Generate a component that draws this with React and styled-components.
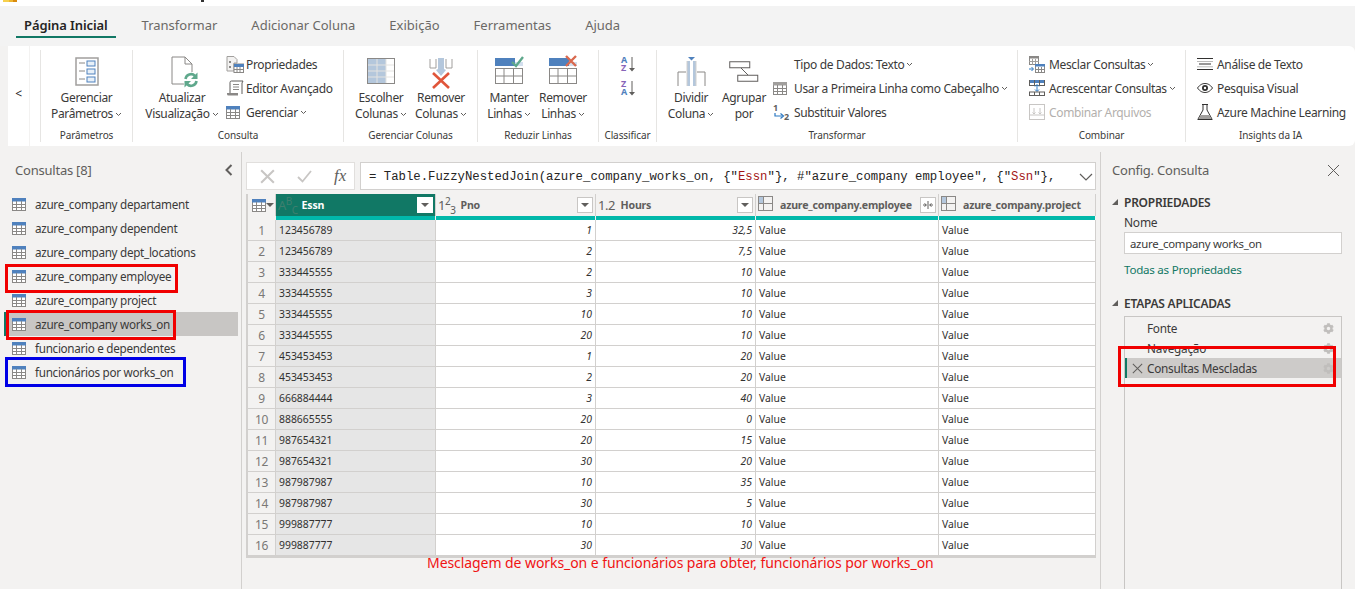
import React from 'react';
import styled, { createGlobalStyle } from 'styled-components';
import { FaCog } from 'react-icons/fa';

const GlobalStyle = createGlobalStyle`
  html, body { margin: 0; padding: 0; background: #f3f2f1; }
  * { box-sizing: border-box; }
`;

const UI = `"Noto Sans", "Open Sans", sans-serif`;

const Page = styled.div`
  position: relative;
  width: 1355px;
  height: 589px;
  overflow: hidden;
  background: #f3f2f1;
  font-family: ${UI};
  color: #252423;
  display: flex;
  flex-direction: column;
`;

const TitleStrip = styled.div`
  height: 6px;
  background: #fff;
  display: flex;
  align-items: flex-start;
  padding-left: 3px;
`;

const LogoSliver = styled.div`
  width: 14px;
  height: 2px;
  background: linear-gradient(90deg, #f6d04d 0 45%, #eeb62f 45% 70%, #d98b0f 70%);
`;

const TitleTail = styled.div`
  width: 3px;
  height: 2px;
  margin-left: 184px;
  background: #333;
`;

const TabBar = styled.div`
  height: 40px;
  background: #f3f3f3;
  display: flex;
  gap: 18px;
  padding-left: 16px;
`;

const Tab = styled.div`
  height: 32px;
  padding: 8px 8px 0;
  display: flex;
  align-items: center;
  font-size: 13px;
  font-weight: ${p => (p.$active ? 600 : 400)};
  letter-spacing: ${p => (p.$active ? '-0.1px' : '0')};
  color: ${p => (p.$active ? '#252423' : '#6b6966')};
  border-bottom: 2px solid ${p => (p.$active ? '#117865' : 'transparent')};
`;

const Ribbon = styled.div`
  height: 100px;
  margin-left: 8px;
  background: #fff;
  border-radius: 0 6px 6px 0;
  display: flex;
  align-items: stretch;
  font-size: 12px;
  letter-spacing: -0.35px;
`;

const Collapse = styled.div`
  width: 22px;
  display: flex;
  align-items: center;
  justify-content: center;
  border-right: 1px solid #f3f2f1;
  font-size: 12px;
  margin-right: 10px;
  padding-bottom: 6px;
`;

const Group = styled.div`
  width: ${p => p.$w}px;
  flex: ${p => (p.$fill ? 1 : 'none')};
  margin: 4px 0;
  border-left: 1px solid #e6e5e3;
  display: flex;
  flex-direction: column;
`;

const GroupBody = styled.div`
  height: 72px;
  flex: none;
  display: flex;
  justify-content: ${p => (p.$center ? 'center' : 'flex-start')};
  padding-left: ${p => p.$pad || 0}px;
  gap: ${p => p.$gap || 0}px;
`;

const GroupLabel = styled.div`
  height: 20px;
  text-align: center;
  font-size: 10px;
  letter-spacing: -0.1px;
  line-height: 26px;
  color: #3b3a39;
`;

const LargeBtn = styled.div`
  width: ${p => p.$w}px;
  display: flex;
  flex-direction: column;
  align-items: center;
  text-align: center;
  line-height: 16px;
  color: #3b3a39;
`;

const LargeIcon = styled.div`
  height: 40px;
  padding-top: ${p => p.$top || 5}px;
  padding-left: ${p => p.$left || 0}px;
`;

const SmallCol = styled.div`
  display: flex;
  flex-direction: column;
  padding-top: 2px;
  margin-left: ${p => p.$left || 0}px;
`;

const SmallBtn = styled.div`
  height: 24px;
  flex: none;
  display: flex;
  align-items: center;
  white-space: nowrap;
  color: ${p => (p.$off ? '#b3b0ad' : '#3b3a39')};
`;

const SmallIcon = styled.span`
  width: ${p => p.$w || 20}px;
  flex: none;
  display: flex;
  align-items: center;
`;

const Caret = styled.svg`
  margin-left: 2px;
  flex: none;
  vertical-align: middle;
`;

const LetterIcon = styled.svg`
  overflow: visible;
  font-family: "Noto Sans", sans-serif;
  font-weight: 700;
`;

const Main = styled.div`
  margin-top: 6px;
  flex: 1;
  display: flex;
  min-height: 0;
`;

const LeftPane = styled.aside`
  width: 242px;
  flex: none;
  border-right: 1px solid #d2d0ce;
`;

const PaneHead = styled.div`
  height: 36px;
  margin-bottom: ${p => p.$after}px;
  padding: 0 ${p => p.$end}px 0 ${p => p.$pad}px;
  display: flex;
  align-items: center;
  justify-content: space-between;
  font-size: 13px;
  letter-spacing: -0.22px;
  color: #605e5c;
`;

const QueryList = styled.div`
  margin: 0 3px 0 4px;
`;

const QueryItem = styled.div`
  height: 24px;
  display: flex;
  align-items: center;
  gap: 9px;
  padding-left: ${p => (p.$on ? 6 : 8)}px;
  font-size: 11.7px;
  letter-spacing: -0.3px;
  color: #3b3a39;
  background: ${p => (p.$on ? '#c8c6c4' : 'transparent')};
  border-left: ${p => (p.$on ? '2px solid #117865' : 'none')};
`;

const Center = styled.main`
  width: 858px;
  flex: none;
  padding: 10px 4px 0;
`;

const FormulaRow = styled.div`
  height: 28px;
  display: flex;
  gap: 5px;
`;

const FormulaTools = styled.div`
  width: 109px;
  background: #fff;
  border: 1px solid #e1dfdd;
  display: flex;
  align-items: center;
  gap: 22px;
  padding-left: 13px;
`;

const FxMark = styled.span`
  font-family: "Liberation Serif", serif;
  font-style: italic;
  font-size: 17px;
  color: #605e5c;
`;

const FormulaInput = styled.div`
  flex: 1;
  background: #fff;
  border: 1px solid #d2d0ce;
  padding: 1px 2px 0 8px;
  display: flex;
  align-items: center;
  justify-content: space-between;
  font-family: "Liberation Mono", monospace;
  font-size: 12.3px;
  color: #252423;
  white-space: pre;
`;

const Str = styled.span`
  color: #a31515;
`;

const Grid = styled.div`
  margin-top: 4px;
  width: 850px;
  border-bottom: 2px solid #d2d0ce;
  border-left: 2px solid #d2d0ce;
`;

const COLS = '28px 160px 160px 160px 183px 157px';

const HeadRow = styled.div`
  display: grid;
  grid-template-columns: ${COLS};
  height: 22px;
`;

const HeadCell = styled.div`
  display: flex;
  align-items: center;
  padding: 0 ${p => (p.$corner ? 0 : 2)}px 0 ${p => (p.$corner ? 4 : 2)}px;
  font-size: 10.6px;
  font-weight: 700;
  letter-spacing: -0.2px;
  white-space: nowrap;
  color: ${p => (p.$on ? '#fff' : '#605e5c')};
  background: ${p => (p.$on ? '#117865' : '#f3f2f1')};
  border-right: 1px solid #d2d0ce;
`;

const TypeMark = styled.span`
  width: ${p => p.$w || 20}px;
  flex: none;
  font-weight: 400;
  font-size: 13px;
  letter-spacing: -0.5px;
  white-space: nowrap;
  color: ${p => (p.$on ? '#3e7f6f' : '#605e5c')};
  sup, sub { font-size: 10px; line-height: 0; }
`;

const HeadName = styled.span`
  flex: 1;
  overflow: hidden;
`;

const FilterBtn = styled.span`
  width: 16px;
  height: 16px;
  flex: none;
  background: #fff;
  border: 1px solid ${p => (p.$on ? '#fff' : '#c8c6c4')};
  display: flex;
  align-items: center;
  justify-content: center;
`;

const AccentRow = styled.div`
  display: grid;
  grid-template-columns: ${COLS};
  height: 4px;
  background: #f3f2f1;
`;

const Accent = styled.div`
  background: ${p => (p.$none ? 'transparent' : '#01b8aa')};
  border-right: 1px solid #f3f2f1;
`;

const Row = styled.div`
  display: grid;
  grid-template-columns: ${COLS};
  height: 21px;
  font-size: 10.4px;
  color: #323130;
  border-bottom: 1px solid #d2d0ce;
`;

const Cell = styled.div`
  display: flex;
  align-items: center;
  padding: 0 3px;
  background: ${p => (p.$shade ? '#e6e6e6' : '#fff')};
  justify-content: ${p => (p.$num ? 'flex-end' : 'flex-start')};
  font-style: ${p => (p.$num ? 'italic' : 'normal')};
  border-right: 1px solid #d2d0ce;
`;

const RowNum = styled(Cell)`
  background: #f3f2f1;
  justify-content: center;
  font-size: 12px;
  letter-spacing: -0.3px;
  color: #7a7876;
`;

const Caption = styled.div`
  margin: -4px 0 0 181px;
  font-size: 14px;
  letter-spacing: -0.07px;
  line-height: 18px;
  color: #f01414;
  white-space: nowrap;
`;

const RightPane = styled.aside`
  flex: 1;
  border-left: 1px solid #d2d0ce;
  display: flex;
  flex-direction: column;
`;

const Section = styled.div`
  padding-left: 23px;
  padding-right: 13px;
`;

const SectionTitle = styled.div`
  position: relative;
  margin-top: ${p => p.$top}px;
  height: 18px;
  display: flex;
  align-items: center;
  font-size: 12px;
  font-weight: 600;
  letter-spacing: -0.25px;
  color: #3b3a39;
`;

const Tri = styled.svg`
  position: absolute;
  left: -12px;
  top: 6px;
`;

const FieldLabel = styled.div`
  margin-top: 4px;
  font-size: 12px;
  letter-spacing: -0.25px;
  line-height: 16px;
  color: #3b3a39;
`;

const NameInput = styled.div`
  height: 22px;
  margin-top: 1px;
  padding-left: 5px;
  background: #fff;
  border: 1px solid #d2d0ce;
  display: flex;
  align-items: center;
  font-size: 11.4px;
  letter-spacing: -0.28px;
  color: #3b3a39;
`;

const LinkText = styled.div`
  margin-top: 8px;
  font-size: 11.6px;
  letter-spacing: -0.25px;
  line-height: 16px;
  color: #117865;
`;

const Steps = styled.div`
  margin: 4px 13px 0 23px;
  flex: 1;
  padding-top: 1px;
  border: 1px solid #c8c6c4;
  border-bottom: none;
`;

const Step = styled.div`
  height: 20px;
  display: flex;
  align-items: center;
  font-size: 11.8px;
  letter-spacing: -0.28px;
  color: #3b3a39;
  padding-left: ${p => (p.$on ? 5 : 22)}px;
  padding-right: 7px;
  background: ${p => (p.$on ? '#cdcbc9' : 'transparent')};
  border-left: ${p => (p.$on ? '2px solid #117865' : 'none')};
  svg.gear { margin-left: auto; color: #c0bebc; }
`;

const StepX = styled.span`
  width: 15px;
  display: flex;
`;

const Mark = styled.div`
  position: absolute;
  left: ${p => p.$x}px;
  top: ${p => p.$y}px;
  width: ${p => p.$w}px;
  height: ${p => p.$h}px;
  border: 3px solid ${p => p.$c};
  pointer-events: none;
`;

/* ---------- icons ---------- */

const Chev = () => (
  <Caret width="7" height="5" viewBox="0 0 7 5">
    <path d="M1 1l2.5 2.5L6 1" fill="none" stroke="#605e5c" strokeWidth="1" />
  </Caret>
);

const TableIcon = ({ w = 14, h = 13, head = '#4f81bd', line = '#8a8886' }) => (
  <svg width={w} height={h} viewBox="0 0 14 13">
    <rect x="0.5" y="0.5" width="13" height="12" fill="#fff" stroke={line} />
    <rect x="0" y="0" width="14" height="3.5" fill={head} />
    <path d="M0 6.5h14M0 9.5h14M4.5 3v10M9.5 3v10" stroke={line} strokeWidth="1" />
  </svg>
);

const ParamsIcon = () => (
  <svg width="24" height="29" viewBox="0 0 24 29">
    <rect x="1" y="1" width="22" height="27" fill="#fff" stroke="#a19f9d" strokeWidth="1.5" />
    <path d="M4 6h6M4 14h6M4 22h6" stroke="#8a8886" />
    <rect x="12" y="4" width="8" height="5" fill="#e8f0f8" stroke="#4f81bd" />
    <rect x="12" y="12" width="8" height="5" fill="#e8f0f8" stroke="#4f81bd" />
    <rect x="12" y="20" width="8" height="5" fill="#e8f0f8" stroke="#4f81bd" />
  </svg>
);

const RefreshIcon = () => (
  <svg width="28" height="32" viewBox="0 0 28 32">
    <path d="M13 28H1V1h13l7 7v8M14 1v7h7" fill="#fff" stroke="#8a8886" />
    <circle cx="20" cy="24" r="8" fill="#fff" />
    <path d="M14.500 23a5.500 5.500 0 0 1 9.500-3" fill="none" stroke="#5fa88c" strokeWidth="2.600" />
    <path d="M26.500 16.500v6.500h-6.500z" fill="#5fa88c" />
    <path d="M25.500 25a5.500 5.500 0 0 1-9.500 3" fill="none" stroke="#5fa88c" strokeWidth="2.600" />
    <path d="M13.500 31.500V25h6.500z" fill="#5fa88c" />
  </svg>
);

const PropsIcon = () => (
  <svg width="18" height="17" viewBox="0 0 18 17">
    <path d="M1 .5h7l3 3V7H8v8H1z" fill="#f3f2f1" stroke="#a19f9d" />
    <path d="M3 5h2v2H3zM3 10h2v2H3z" fill="#8a8886" />
    <rect x="8" y="8" width="9.5" height="8.5" fill="#fff" stroke="#8a8886" />
    <rect x="8" y="8" width="10" height="3" fill="#4f81bd" />
    <path d="M8 13.5h10M11 11v6M14 11v6" stroke="#8a8886" />
  </svg>
);

const ScrollIcon = () => (
  <svg width="18" height="16" viewBox="0 0 18 16">
    <path d="M4 13V2.5A1.5 1.5 0 0 1 5.5 1H17l-1 2v11" fill="#fff" stroke="#605e5c" />
    <path d="M1 13h11v2.5H2.5A1.5 1.5 0 0 1 1 14z" fill="#8a8886" />
    <path d="M7 4.5h6M7 7h6M7 9.5h6" stroke="#8a8886" />
  </svg>
);

const ColumnsIcon = () => (
  <svg width="28" height="26" viewBox="0 0 28 26">
    <rect x="0.5" y="0.5" width="27" height="25" fill="#fff" stroke="#8a8886" />
    <rect x="1" y="1" width="18" height="24" fill="#b4c7dc" />
    <path d="M1 7h26M1 13h26M1 19h26M10 1v24M19 1v24" stroke="#e4e3e1" />
  </svg>
);

const RemoveColsIcon = () => (
  <svg width="24" height="31" viewBox="0 0 24 31">
    <path d="M1 1v9h6V1M17 1v9h6V1" fill="none" stroke="#a19f9d" />
    <path d="M9 0h6v11l2 1-5 6-5-6 2-1z" fill="#b4c7dc" />
    <path d="M4 15l16 15M20 15L4 30" stroke="#e0553a" strokeWidth="2.6" />
  </svg>
);

const KeepRowsIcon = ({ remove }) => (
  <svg width="30" height="30" viewBox="0 0 30 30">
    <rect x="1" y="3" width="20" height="8" fill="#4f81bd" />
    <rect x="21" y="7" width="8" height="4" fill="#4f81bd" opacity="0.25" />
    <rect x="1.5" y="13.5" width="27" height="15" fill="#fff" stroke="#8a8886" />
    <path d="M1 21h28M10 13v16M19.500 13v16" stroke="#8a8886" />
    {remove ? (
      <path d="M18 1l10 10M28 1L18 11" stroke="#d9694f" strokeWidth="2.4" />
    ) : (
      <path d="M18 7l4 4 7-9" fill="none" stroke="#5fa88c" strokeWidth="2.4" />
    )}
  </svg>
);

const SortIcon = ({ top, bottom, topC, bottomC }) => (
  <LetterIcon width="16" height="17" viewBox="0 0 16 17">
    <text x="1" y="7" fontSize="9" fill={topC}>{top}</text>
    <text x="1" y="15" fontSize="9" fill={bottomC}>{bottom}</text>
    <path d="M12 1v13" stroke="#605e5c" />
    <path d="M9 12h6l-3 3.500z" fill="#605e5c" />
  </LetterIcon>
);

const SplitIcon = () => (
  <svg width="29" height="29" viewBox="0 0 29 29">
    <path d="M1 29V15h8M28 29V15h-8" fill="none" stroke="#8a8886" />
    <path d="M10 4h3v25h-3zM16 4h3v25h-3z" fill="#b4c7dc" />
    <path d="M10 4v25M19 4v25" stroke="#d2d0ce" />
    <path d="M11 0h7l-3.500 3.500z" fill="#4f81bd" />
  </svg>
);

const GroupByIcon = () => (
  <svg width="30" height="21" viewBox="0 0 30 21">
    <rect x="0.750" y="0.750" width="20" height="6" fill="#fff" stroke="#605e5c" />
    <rect x="8.750" y="14.250" width="20" height="6" fill="#fff" stroke="#605e5c" />
    <path d="M12 7l7 7" stroke="#605e5c" />
  </svg>
);

const ReplaceIcon = () => (
  <LetterIcon width="18" height="18" viewBox="0 0 18 18">
    <text x="0" y="8" fontSize="9" fill="#605e5c">1</text>
    <text x="11" y="17" fontSize="9" fill="#605e5c">2</text>
    <path d="M2 10v3h7" fill="none" stroke="#2b78c2" strokeWidth="1.200" />
    <path d="M7.500 10.500l3 2.500-3 2.500" fill="none" stroke="#2b78c2" strokeWidth="1.200" />
  </LetterIcon>
);

const MergeIcon = () => (
  <svg width="16" height="17" viewBox="0 0 16 17">
    <rect x="0.500" y="0.500" width="9" height="8" fill="#fff" stroke="#8a8886" />
    <rect x="0" y="0" width="10" height="2.500" fill="#8a8886" />
    <path d="M0 5.500h10M3.500 3v6M6.500 3v6" stroke="#a19f9d" />
    <rect x="6.500" y="8.500" width="9" height="8" fill="#fff" stroke="#8a8886" />
    <rect x="6" y="8" width="10" height="2.500" fill="#4f81bd" />
    <path d="M6 13.500h10M9.500 11v6M12.500 11v6" stroke="#8a8886" />
    <path d="M0 13h4M2.500 11l2 2-2 2" fill="none" stroke="#2b78c2" />
  </svg>
);

const AppendIcon = () => (
  <svg width="16" height="16" viewBox="0 0 16 16">
    <rect x="0" y="0" width="16" height="3" fill="#4f81bd" />
    <path d="M.500 0v5.500M5.500 0v5.500M10.500 0v5.500M15.500 0v5.500M0 5.500h16" stroke="#605e5c" />
    <path d="M8 5v6M6 6.500l2-2 2 2M6 9.500l2 2 2-2" fill="none" stroke="#2b78c2" />
    <rect x="0.500" y="12" width="15" height="3.500" fill="#fff" stroke="#605e5c" />
    <path d="M5.500 12v4M10.500 12v4" stroke="#605e5c" />
  </svg>
);

const CombineIcon = () => (
  <svg width="16" height="16" viewBox="0 0 16 16">
    <rect x="0.500" y="0.500" width="15" height="15" fill="#fff" stroke="#c8c6c4" />
    <path d="M1 11h14M5 4v6M3.500 8.500L5 10l1.500-1.500M11 4v6M9.500 8.500L11 10l1.500-1.500" fill="none" stroke="#c8c6c4" />
  </svg>
);

const LinesIcon = () => (
  <svg width="16" height="14" viewBox="0 0 16 14">
    <path d="M0 1.500h16M2 7h12M0 12.500h16" stroke="#323130" strokeWidth="1.100" />
    <path d="M0 4.500h16M0 9.800h16" stroke="#a19f9d" strokeWidth="0.700" />
  </svg>
);

const EyeIcon = () => (
  <svg width="16" height="10" viewBox="0 0 16 10">
    <path d="M.500 5C3 1.500 5.500.500 8 .500s5 1 7.500 4.500C13 8.500 10.500 9.500 8 9.500S3 8.500.500 5z" fill="#fff" stroke="#323130" />
    <circle cx="8" cy="5" r="3" fill="#323130" />
    <circle cx="8" cy="5" r="1.200" fill="#fff" />
  </svg>
);

const FlaskIcon = () => (
  <svg width="16" height="16" viewBox="0 0 16 16">
    <path d="M5 .500h6M6 .500v5.500L.800 15.500h14.400L10 6V.500" fill="#fff" stroke="#323130" />
    <path d="M3.500 11h9l2 4H1.500z" fill="#a19f9d" />
  </svg>
);

const CloseX = ({ s = 13, c = '#605e5c', w = 1 }) => (
  <svg width={s} height={s} viewBox="0 0 13 13">
    <path d="M1 1l11 11M12 1L1 12" stroke={c} strokeWidth={w} fill="none" />
  </svg>
);

const CheckMark = () => (
  <svg width="15" height="13" viewBox="0 0 15 13">
    <path d="M1 7l4.500 4.500L14 1" fill="none" stroke="#c8c6c4" strokeWidth="1.800" />
  </svg>
);

const BackChevron = () => (
  <svg width="8" height="12" viewBox="0 0 8 12">
    <path d="M6.500 1L1.500 6l5 5" fill="none" stroke="#605e5c" strokeWidth="2" />
  </svg>
);

const DownChevron = () => (
  <svg width="14" height="8" viewBox="0 0 14 8">
    <path d="M1 1l6 6 6-6" fill="none" stroke="#605e5c" strokeWidth="1.200" />
  </svg>
);

const FilterTri = ({ c = '#605e5c' }) => (
  <svg width="8" height="4" viewBox="0 0 8 4">
    <path d="M0 0h8L4 4z" fill={c} />
  </svg>
);

const ExpandIcon = () => (
  <svg width="12" height="8" viewBox="0 0 12 8">
    <path d="M1 4h3M2.500 2.500L4.500 4l-2 1.500M11 4H8M9.500 2.500L7.500 4l2 1.500M6 0v8" fill="none" stroke="#605e5c" />
  </svg>
);

const ColTableIcon = () => (
  <svg width="15" height="15" viewBox="0 0 15 15">
    <rect x="0.500" y="0.500" width="14" height="14" fill="#f3f2f1" stroke="#8a8886" />
    <path d="M0 7.500h15M5.500 0v15" stroke="#8a8886" />
    <rect x="1" y="1" width="4" height="6" fill="#b4c7dc" />
  </svg>
);

const TriDown = () => (
  <Tri width="6" height="6" viewBox="0 0 6 6">
    <path d="M6 0v6H0z" fill="#605e5c" />
  </Tri>
);

/* ---------- data ---------- */

const queries = [
  'azure_company departament',
  'azure_company dependent',
  'azure_company dept_locations',
  'azure_company employee',
  'azure_company project',
  'azure_company works_on',
  'funcionario e dependentes',
  'funcionários por works_on',
];

const rows = [
  ['123456789', '1', '32,5'],
  ['123456789', '2', '7,5'],
  ['333445555', '2', '10'],
  ['333445555', '3', '10'],
  ['333445555', '10', '10'],
  ['333445555', '20', '10'],
  ['453453453', '1', '20'],
  ['453453453', '2', '20'],
  ['666884444', '3', '40'],
  ['888665555', '20', '0'],
  ['987654321', '20', '15'],
  ['987654321', '30', '20'],
  ['987987987', '10', '35'],
  ['987987987', '30', '5'],
  ['999887777', '10', '10'],
  ['999887777', '30', '30'],
];

const tabs = ['Página Inicial', 'Transformar', 'Adicionar Coluna', 'Exibição', 'Ferramentas', 'Ajuda'];

const App = () => (
  <Page>
    <GlobalStyle />
    <TitleStrip>
      <LogoSliver />
      <TitleTail />
    </TitleStrip>

    <TabBar>
      {tabs.map((t, i) => (
        <Tab key={t} $active={i === 0}>{t}</Tab>
      ))}
    </TabBar>

    <Ribbon>
      <Collapse>&lt;</Collapse>

      <Group $w={92}>
        <GroupBody $center>
          <LargeBtn $w={80}>
            <LargeIcon $top={7}><ParamsIcon /></LargeIcon>
            <span>Gerenciar</span>
            <span>Parâmetros<Chev /></span>
          </LargeBtn>
        </GroupBody>
        <GroupLabel>Parâmetros</GroupLabel>
      </Group>

      <Group $w={211}>
        <GroupBody $pad={5}>
          <LargeBtn $w={88}>
            <LargeIcon $top={6} $left={5}><RefreshIcon /></LargeIcon>
            <span>Atualizar</span>
            <span>Visualização<Chev /></span>
          </LargeBtn>
          <SmallCol>
            <SmallBtn><SmallIcon><PropsIcon /></SmallIcon>Propriedades</SmallBtn>
            <SmallBtn><SmallIcon><ScrollIcon /></SmallIcon>Editor Avançado</SmallBtn>
            <SmallBtn><SmallIcon><TableIcon /></SmallIcon>Gerenciar<Chev /></SmallBtn>
          </SmallCol>
        </GroupBody>
        <GroupLabel>Consulta</GroupLabel>
      </Group>

      <Group $w={134}>
        <GroupBody $pad={7}>
          <LargeBtn $w={60}>
            <LargeIcon $top={8}><ColumnsIcon /></LargeIcon>
            <span>Escolher</span>
            <span>Colunas<Chev /></span>
          </LargeBtn>
          <LargeBtn $w={60}>
            <LargeIcon $top={8}><RemoveColsIcon /></LargeIcon>
            <span>Remover</span>
            <span>Colunas<Chev /></span>
          </LargeBtn>
        </GroupBody>
        <GroupLabel>Gerenciar Colunas</GroupLabel>
      </Group>

      <Group $w={121}>
        <GroupBody $pad={4}>
          <LargeBtn $w={54}>
            <LargeIcon $top={5}><KeepRowsIcon /></LargeIcon>
            <span>Manter</span>
            <span>Linhas<Chev /></span>
          </LargeBtn>
          <LargeBtn $w={54}>
            <LargeIcon $top={5}><KeepRowsIcon remove /></LargeIcon>
            <span>Remover</span>
            <span>Linhas<Chev /></span>
          </LargeBtn>
        </GroupBody>
        <GroupLabel>Reduzir Linhas</GroupLabel>
      </Group>

      <Group $w={58}>
        <GroupBody $center>
          <SmallCol>
            <SmallBtn><SortIcon top="A" bottom="Z" topC="#4f81bd" bottomC="#8764b8" /></SmallBtn>
            <SmallBtn><SortIcon top="Z" bottom="A" topC="#8764b8" bottomC="#4f81bd" /></SmallBtn>
          </SmallCol>
        </GroupBody>
        <GroupLabel>Classificar</GroupLabel>
      </Group>

      <Group $w={361}>
        <GroupBody $pad={7}>
          <LargeBtn $w={54}>
            <LargeIcon $top={7}><SplitIcon /></LargeIcon>
            <span>Dividir</span>
            <span>Coluna<Chev /></span>
          </LargeBtn>
          <LargeBtn $w={52}>
            <LargeIcon $top={11}><GroupByIcon /></LargeIcon>
            <span>Agrupar</span>
            <span>por</span>
          </LargeBtn>
          <SmallCol $left={3}>
            <SmallBtn><SmallIcon $w={21} />Tipo de Dados: Texto<Chev /></SmallBtn>
            <SmallBtn><SmallIcon $w={21}><TableIcon head="#a19f9d" /></SmallIcon>Usar a Primeira Linha como Cabeçalho<Chev /></SmallBtn>
            <SmallBtn><SmallIcon $w={21}><ReplaceIcon /></SmallIcon>Substituir Valores</SmallBtn>
          </SmallCol>
        </GroupBody>
        <GroupLabel>Transformar</GroupLabel>
      </Group>

      <Group $w={168}>
        <GroupBody $pad={11}>
          <SmallCol>
            <SmallBtn><SmallIcon><MergeIcon /></SmallIcon>Mesclar Consultas<Chev /></SmallBtn>
            <SmallBtn><SmallIcon><AppendIcon /></SmallIcon>Acrescentar Consultas<Chev /></SmallBtn>
            <SmallBtn $off><SmallIcon><CombineIcon /></SmallIcon>Combinar Arquivos</SmallBtn>
          </SmallCol>
        </GroupBody>
        <GroupLabel>Combinar</GroupLabel>
      </Group>

      <Group $fill>
        <GroupBody $pad={11}>
          <SmallCol>
            <SmallBtn><SmallIcon><LinesIcon /></SmallIcon>Análise de Texto</SmallBtn>
            <SmallBtn><SmallIcon><EyeIcon /></SmallIcon>Pesquisa Visual</SmallBtn>
            <SmallBtn><SmallIcon><FlaskIcon /></SmallIcon>Azure Machine Learning</SmallBtn>
          </SmallCol>
        </GroupBody>
        <GroupLabel>Insights da IA</GroupLabel>
      </Group>
    </Ribbon>

    <Main>
      <LeftPane>
        <PaneHead $pad={15} $end={8} $after={4}>
          <span>Consultas [8]</span>
          <BackChevron />
        </PaneHead>
        <QueryList>
          {queries.map((q, i) => (
            <QueryItem key={q} $on={i === 5}>
              <TableIcon />
              {q}
            </QueryItem>
          ))}
        </QueryList>
      </LeftPane>

      <Center>
        <FormulaRow>
          <FormulaTools>
            <CloseX s={15} c="#c8c6c4" w={1.8} />
            <CheckMark />
            <FxMark>fx</FxMark>
          </FormulaTools>
          <FormulaInput>
            <span>= Table.FuzzyNestedJoin(azure_company_works_on, {'{"'}<Str>Essn</Str>{'"}'}, #"azure_company employee", {'{"'}<Str>Ssn</Str>{'"}'},</span>
            <DownChevron />
          </FormulaInput>
        </FormulaRow>

        <Grid>
          <HeadRow>
            <HeadCell $corner>
              <TableIcon />
              <FilterTri />
            </HeadCell>
            <HeadCell $on>
              <TypeMark $on $w={21}>A<sup>B</sup><sub>C</sub></TypeMark>
              <HeadName>&nbsp;Essn</HeadName>
              <FilterBtn $on><FilterTri /></FilterBtn>
            </HeadCell>
            <HeadCell>
              <TypeMark>1<sup>2</sup><sub>3</sub></TypeMark>
              <HeadName>&nbsp;Pno</HeadName>
              <FilterBtn><FilterTri /></FilterBtn>
            </HeadCell>
            <HeadCell>
              <TypeMark>1.2</TypeMark>
              <HeadName>&nbsp;Hours</HeadName>
              <FilterBtn><FilterTri /></FilterBtn>
            </HeadCell>
            <HeadCell>
              <TypeMark $w={22}><ColTableIcon /></TypeMark>
              <HeadName>azure_company.employee</HeadName>
              <FilterBtn><ExpandIcon /></FilterBtn>
            </HeadCell>
            <HeadCell>
              <TypeMark $w={22}><ColTableIcon /></TypeMark>
              <HeadName>azure_company.project</HeadName>
            </HeadCell>
          </HeadRow>
          <AccentRow>
            <Accent $none />
            <Accent /><Accent /><Accent /><Accent /><Accent />
          </AccentRow>
          {rows.map(([essn, pno, hours], i) => (
            <Row key={i}>
              <RowNum>{i + 1}</RowNum>
              <Cell $shade>{essn}</Cell>
              <Cell $num>{pno}</Cell>
              <Cell $num>{hours}</Cell>
              <Cell>Value</Cell>
              <Cell>Value</Cell>
            </Row>
          ))}
        </Grid>
        <Caption>Mesclagem de works_on e funcionários para obter, funcionários por works_on</Caption>
      </Center>

      <RightPane>
        <PaneHead $pad={11} $end={15} $after={5}>
          <span>Config. Consulta</span>
          <CloseX />
        </PaneHead>
        <Section>
          <SectionTitle $top={0}><TriDown />PROPRIEDADES</SectionTitle>
          <FieldLabel>Nome</FieldLabel>
          <NameInput>azure_company works_on</NameInput>
          <LinkText>Todas as Propriedades</LinkText>
          <SectionTitle $top={16}><TriDown />ETAPAS APLICADAS</SectionTitle>
        </Section>
        <Steps>
          <Step>Fonte<FaCog className="gear" size={11} /></Step>
          <Step>Navegação<FaCog className="gear" size={11} /></Step>
          <Step $on>
            <StepX><CloseX s={11} c="#605e5c" w={1.2} /></StepX>
            Consultas Mescladas
            <FaCog className="gear" size={11} />
          </Step>
        </Steps>
      </RightPane>
    </Main>

    <Mark $c="#f00000" $x={5} $y={264} $w={173} $h={29} />
    <Mark $c="#f00000" $x={6} $y={310} $w={170} $h={30} />
    <Mark $c="#0000e6" $x={5} $y={357} $w={181} $h={30} />
    <Mark $c="#f00000" $x={1118} $y={346} $w={218} $h={41} />
  </Page>
);

export default App;
